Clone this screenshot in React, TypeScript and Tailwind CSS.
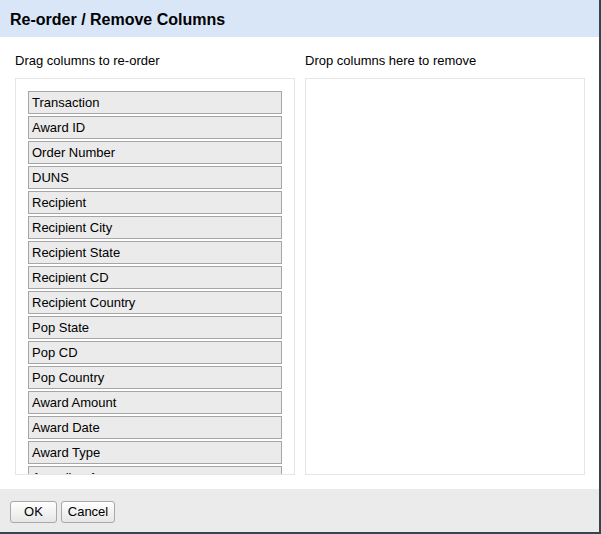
import React from "react";

const items = [
  "Transaction",
  "Award ID",
  "Order Number",
  "DUNS",
  "Recipient",
  "Recipient City",
  "Recipient State",
  "Recipient CD",
  "Recipient Country",
  "Pop State",
  "Pop CD",
  "Pop Country",
  "Award Amount",
  "Award Date",
  "Award Type",
  "Awarding Agency",
];

export default function App() {
  return (
    <div
      className="w-[601px] h-[534px] bg-white flex flex-col border-r-2 border-b-2 border-[#35444e] text-black"
      style={{ fontFamily: '"Liberation Sans", Arial, sans-serif' }}
    >
      <div className="h-[37px] shrink-0 bg-[#d8e6f8] flex items-center pl-[10px] pt-[2px]">
        <h1 className="text-[16px] font-bold leading-[18px]">Re-order / Remove Columns</h1>
      </div>
      <div className="flex-1 flex gap-[10px] pl-[15px] pt-[16px]">
        <div className="w-[280px] flex flex-col">
          <div className="text-[13px] leading-[16px] h-[16px] mb-[9px]">Drag columns to re-order</div>
          <div className="h-[397px] border border-[#e6e6e6] pt-[12px] px-[12px] overflow-hidden flex flex-col gap-[2px]">
            {items.map((it) => (
              <div
                key={it}
                className="h-[23px] shrink-0 border border-[#a6a6a6] bg-[#ebebeb] pl-[3px] text-[13px] leading-[22px]"
              >
                {it}
              </div>
            ))}
          </div>
        </div>
        <div className="w-[280px] flex flex-col">
          <div className="text-[13px] leading-[16px] h-[16px] mb-[9px]">Drop columns here to remove</div>
          <div className="h-[397px] border border-[#e6e6e6]" />
        </div>
      </div>
      <div className="h-[43px] shrink-0 bg-[#ebebeb] flex items-start gap-[4px] pl-[10px] pt-[12px]">
        <button className="w-[47px] h-[22px] rounded-[3px] border border-[#a9a9a9] bg-gradient-to-b from-white to-[#e6e6e6] text-[13px] leading-[20px]">
          OK
        </button>
        <button className="w-[54px] h-[22px] rounded-[3px] border border-[#a9a9a9] bg-gradient-to-b from-white to-[#e6e6e6] text-[13px] leading-[20px]">
          Cancel
        </button>
      </div>
    </div>
  );
}
